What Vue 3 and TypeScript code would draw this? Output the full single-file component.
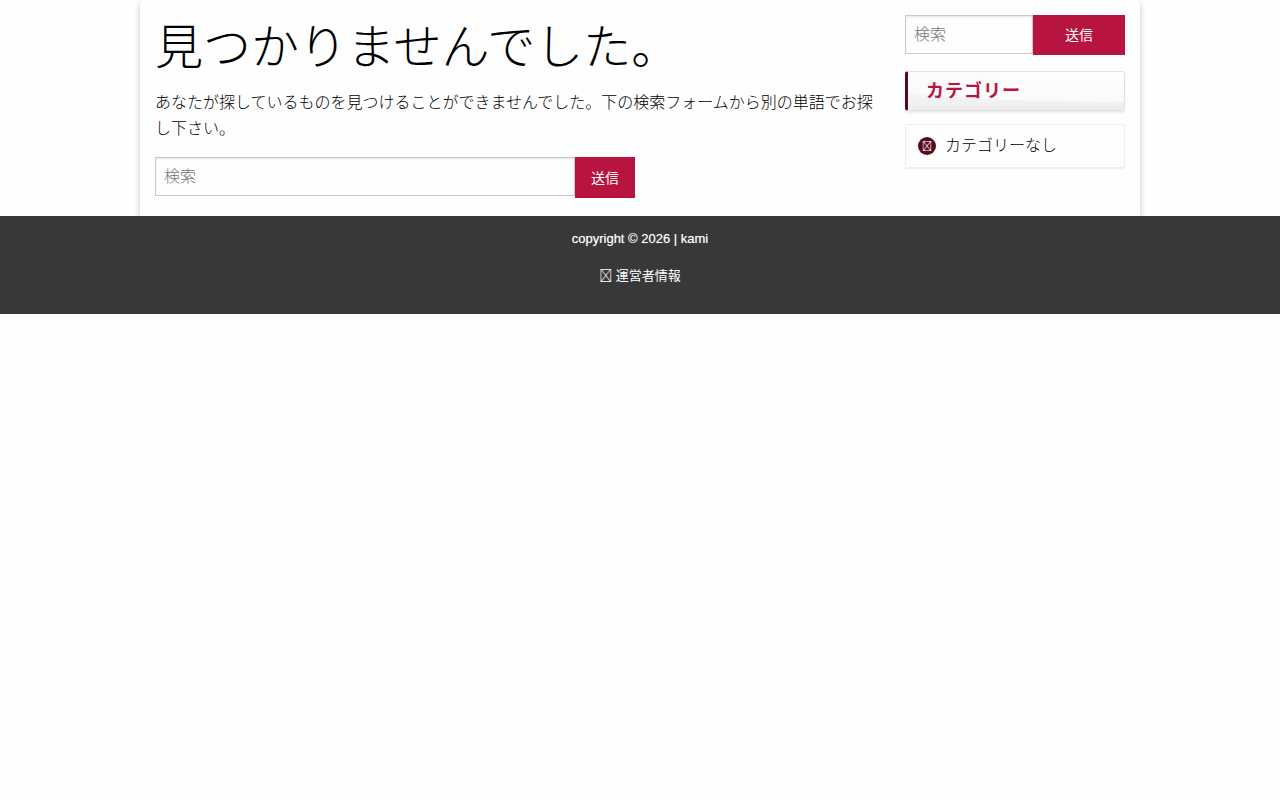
<script setup lang="ts">
import { ref } from 'vue'

interface Category {
  name: string
  href: string
}

const pageQuery = ref('')
const sideQuery = ref('')
const iconGlyph = '\uf0da'
const categories: Category[] = [{ name: 'カテゴリーなし', href: '#category' }]
</script>

<template>
  <div class="site">
    <div class="container">
      <main class="content">
        <h1>見つかりませんでした。</h1>
        <p>あなたが探しているものを見つけることができませんでした。下の検索フォームから別の単語でお探し下さい。</p>
        <form class="search main-search" role="search" @submit.prevent>
          <input v-model="pageQuery" type="text" placeholder="検索" aria-label="検索" />
          <button type="submit">送信</button>
        </form>
      </main>
      <aside class="sidebar">
        <form class="search side-search" role="search" @submit.prevent>
          <input v-model="sideQuery" type="text" placeholder="検索" aria-label="サイト内検索" />
          <button type="submit">送信</button>
        </form>
        <h2>カテゴリー</h2>
        <ul class="categories">
          <li v-for="category in categories" :key="category.name">
            <span class="bullet" aria-hidden="true">{{ iconGlyph }}</span>
            <a :href="category.href">{{ category.name }}</a>
          </li>
        </ul>
      </aside>
    </div>
    <footer>
      <p>copyright © 2026 | kami</p>
      <p><a href="#about"><span class="mark" aria-hidden="true">{{ iconGlyph }}</span> 運営者情報</a></p>
    </footer>
  </div>
</template>

<style>
body {
  margin: 0;
  background: #fefefe;
}
</style>

<style scoped>
.site,
.site * {
  box-sizing: border-box;
}

.site {
  color: #0a0a0a;
  font-family: "Noto Sans CJK JP", sans-serif;
  font-size: 16px;
  font-weight: 300;
  line-height: 26px;
}

.container {
  display: flex;
  max-width: 1000px;
  margin: 0 auto;
  background: #fefefe;
  box-shadow: 0 3px 6px rgba(0, 0, 0, 0.22);
}

.content {
  width: 75%;
  padding: 12px 15px 18px;
}

.sidebar {
  width: 25%;
  padding: 15px;
}

h1 {
  margin: 0 0 14px;
  color: #000;
  font-size: 48px;
  font-weight: 300;
  line-height: 62px;
}

.content p {
  margin: 0 0 17px;
  color: #000;
}

.search {
  display: flex;
  align-items: flex-start;
}

.main-search {
  width: 66.6667%;
}

.search input {
  flex: 1;
  min-width: 0;
  height: 39px;
  padding: 6px 8px 9px;
  border: 1px solid #cacaca;
  border-radius: 0;
  background: #fefefe;
  box-shadow: inset 0 1px 2px rgba(10, 10, 10, 0.1);
  color: #0a0a0a;
  font: inherit;
  line-height: 22px;
}

.search input::placeholder {
  color: #757575;
}

.search button {
  height: 41px;
  padding: 0 16px 2px;
  border: 0;
  background: #b71540;
  color: #fefefe;
  font-family: inherit;
  font-size: 14px;
  font-weight: 400;
}

.side-search button {
  width: 92px;
  height: 40px;
}

h2 {
  margin: 16px 0 13px;
  padding: 4px 18px 8px;
  border: 1px solid #e3e3e3;
  border-left: 3px solid #570a1e;
  border-radius: 3px;
  background: radial-gradient(ellipse 280px 30px at 90% 0, #fff, #fafafa 98%, transparent 100%), linear-gradient(#fff, #ededed);
  box-shadow: 0 2px 2px rgba(0, 0, 0, 0.08);
  color: #b71540;
  font-size: 18px;
  font-weight: 700;
  letter-spacing: 1px;
}

.categories {
  margin: 0;
  padding: 6px 12px 10px;
  border: 1px solid #eee;
  box-shadow: 0 1px 1px rgba(0, 0, 0, 0.05);
  list-style: none;
}

.categories li {
  display: flex;
  align-items: flex-end;
  gap: 9px;
}

.categories a {
  color: #000;
}

.bullet {
  width: 18px;
  height: 18px;
  margin-bottom: 2px;
  border-radius: 50%;
  background: #570a1e;
  color: #fff;
  font-size: 10px;
  font-weight: 400;
  line-height: 18px;
  text-align: center;
}

a {
  color: inherit;
  text-decoration: none;
}

footer {
  position: relative;
  padding: 13px 0 28px;
  background: #383838;
  color: #fff;
  font-family: "Liberation Sans", "Noto Sans CJK JP", sans-serif;
  font-size: 13px;
  font-weight: 400;
  line-height: 20px;
  text-align: center;
}

footer p {
  margin: 0;
  text-shadow: 0 0 1px rgba(255, 255, 255, 0.5);
}

footer p + p {
  margin-top: 16px;
  text-shadow: none;
}

.mark {
  font-family: "Noto Sans CJK JP", sans-serif;
}
</style>
